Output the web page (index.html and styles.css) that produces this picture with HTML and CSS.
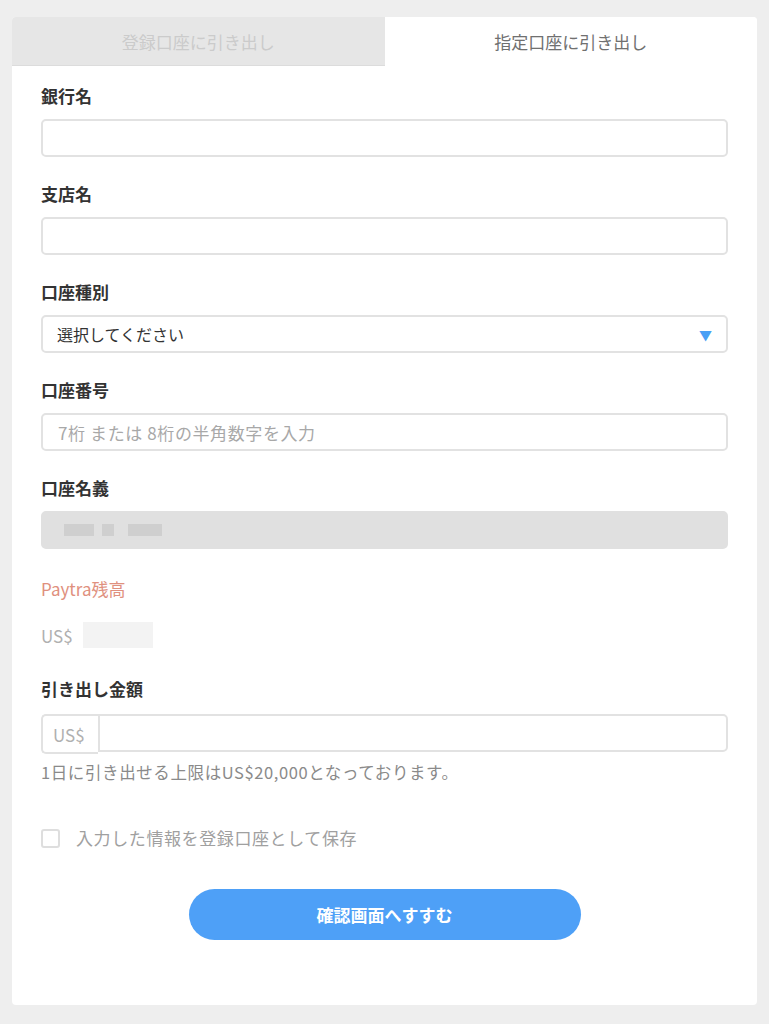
FILE: index.html
```html
<!DOCTYPE html>
<html lang="ja">
<head>
  <meta charset="UTF-8">
  <title>引き出し</title>
  <link rel="stylesheet" href="styles.css">
</head>
<body>
  <div class="card">
    <div class="tabs">
      <div class="tab">登録口座に引き出し</div>
      <div class="tab active">指定口座に引き出し</div>
    </div>

    <form class="form">
      <div class="field">
        <label class="label">銀行名</label>
        <input class="input" type="text">
      </div>

      <div class="field">
        <label class="label">支店名</label>
        <input class="input" type="text">
      </div>

      <div class="field">
        <label class="label">口座種別</label>
        <div class="select">
          <span>選択してください</span>
          <span class="arrow">▼</span>
        </div>
      </div>

      <div class="field">
        <label class="label">口座番号</label>
        <input class="input" type="text" placeholder="7桁 または 8桁の半角数字を入力">
      </div>

      <div class="field">
        <label class="label">口座名義</label>
        <div class="input disabled">
          <span class="blur b1"></span><span class="blur b2"></span><span class="blur b3"></span>
        </div>
      </div>

      <div class="balance">
        <div class="balance-title">Paytra残高</div>
        <div class="balance-row">
          <span>US$</span>
          <span class="balance-blur"></span>
        </div>
      </div>

      <div class="field amount">
        <label class="label">引き出し金額</label>
        <div class="group">
          <span class="addon">US$</span>
          <input class="input group-input" type="text">
        </div>
        <p class="help">1日に引き出せる上限はUS$20,000となっております。</p>
      </div>

      <label class="check">
        <span class="box"></span>
        入力した情報を登録口座として保存
      </label>

      <div class="actions">
        <button type="button" class="submit">確認画面へすすむ</button>
      </div>
    </form>
  </div>
</body>
</html>
```

FILE: styles.css
```css
body {
  margin: 0;
  padding: 17px 12px 20px;
  background: #eeeeee;
  font-family: "Noto Sans CJK JP", "Noto Sans", sans-serif;
  color: #333;
}
.card {
  background: #fff;
  border-radius: 4px;
  overflow: hidden;
}
.tabs {
  display: flex;
  height: 49px;
}
.tab {
  flex: 1;
  display: flex;
  align-items: center;
  justify-content: center;
  font-size: 17px;
  color: #cbcbcb;
  background: #e6e6e6;
  border-bottom: 1px solid #dcdcdc;
}
.tab.active {
  background: #fff;
  color: #707070;
  border-bottom: none;
}
.form {
  padding: 18px 29px 65px;
}
.field {
  margin-bottom: 25px;
}
.label {
  display: block;
  font-size: 17px;
  font-weight: bold;
  line-height: 24px;
  margin-bottom: 11px;
}
.input {
  display: block;
  box-sizing: border-box;
  width: 100%;
  height: 38px;
  border: 2px solid #e2e2e2;
  border-radius: 5px;
  padding: 0 15px;
  font-family: inherit;
  font-size: 17px;
  color: #333;
  background: #fff;
}
.input::placeholder {
  color: #a8a8a8;
  letter-spacing: 0.6px;
}
.select {
  display: flex;
  align-items: center;
  justify-content: space-between;
  box-sizing: border-box;
  height: 38px;
  border: 2px solid #e2e2e2;
  border-radius: 5px;
  padding: 0 14px;
  font-size: 16px;
}
.arrow {
  color: #4a9ff5;
  font-size: 13px;
}
.disabled {
  background: #e0e0e0;
  border-color: #e0e0e0;
  display: flex;
  align-items: center;
}
.blur {
  display: inline-block;
  height: 12px;
  background: #cfcfcf;
}
.b1 { width: 30px; margin-left: 6px; }
.b2 { width: 12px; margin-left: 8px; }
.b3 { width: 34px; margin-left: 14px; }
.balance {
  margin-top: 28px;
  margin-bottom: 23px;
}
.balance-title {
  font-size: 17px;
  line-height: 24px;
  color: #e0907e;
}
.balance-row {
  display: flex;
  align-items: center;
  height: 38px;
  margin-top: 15px;
  font-size: 17px;
  color: #b0b0b0;
}
.balance-blur {
  display: inline-block;
  width: 70px;
  height: 26px;
  margin-left: 10px;
  background: #f3f3f3;
}
.amount .label {
  margin-bottom: 13px;
}
.group {
  display: flex;
}
.addon {
  display: flex;
  align-items: center;
  box-sizing: border-box;
  width: 57px;
  height: 40px;
  padding-left: 10px;
  border: 2px solid #e2e2e2;
  border-right: none;
  border-radius: 5px 0 0 5px;
  font-size: 17px;
  color: #b0b0b0;
}
.group-input {
  flex: 1;
  border-radius: 0 5px 5px 0;
}
.help {
  margin: 6px 0 0;
  font-size: 16.5px;
  line-height: 24px;
  letter-spacing: 0.6px;
  color: #8a8a8a;
}
.check {
  display: flex;
  align-items: center;
  gap: 16px;
  margin-top: 42px;
  font-size: 17px;
  line-height: 24px;
  letter-spacing: 0.6px;
  color: #a0a0a0;
}
.box {
  display: inline-block;
  box-sizing: border-box;
  width: 19px;
  height: 19px;
  border: 2px solid #dedede;
  border-radius: 3px;
}
.actions {
  display: flex;
  justify-content: center;
  margin-top: 39px;
}
.submit {
  width: 392px;
  height: 51px;
  border: none;
  border-radius: 26px;
  background: #4ea0f7;
  color: #fff;
  font-family: inherit;
  font-size: 17px;
  font-weight: bold;
}
```
